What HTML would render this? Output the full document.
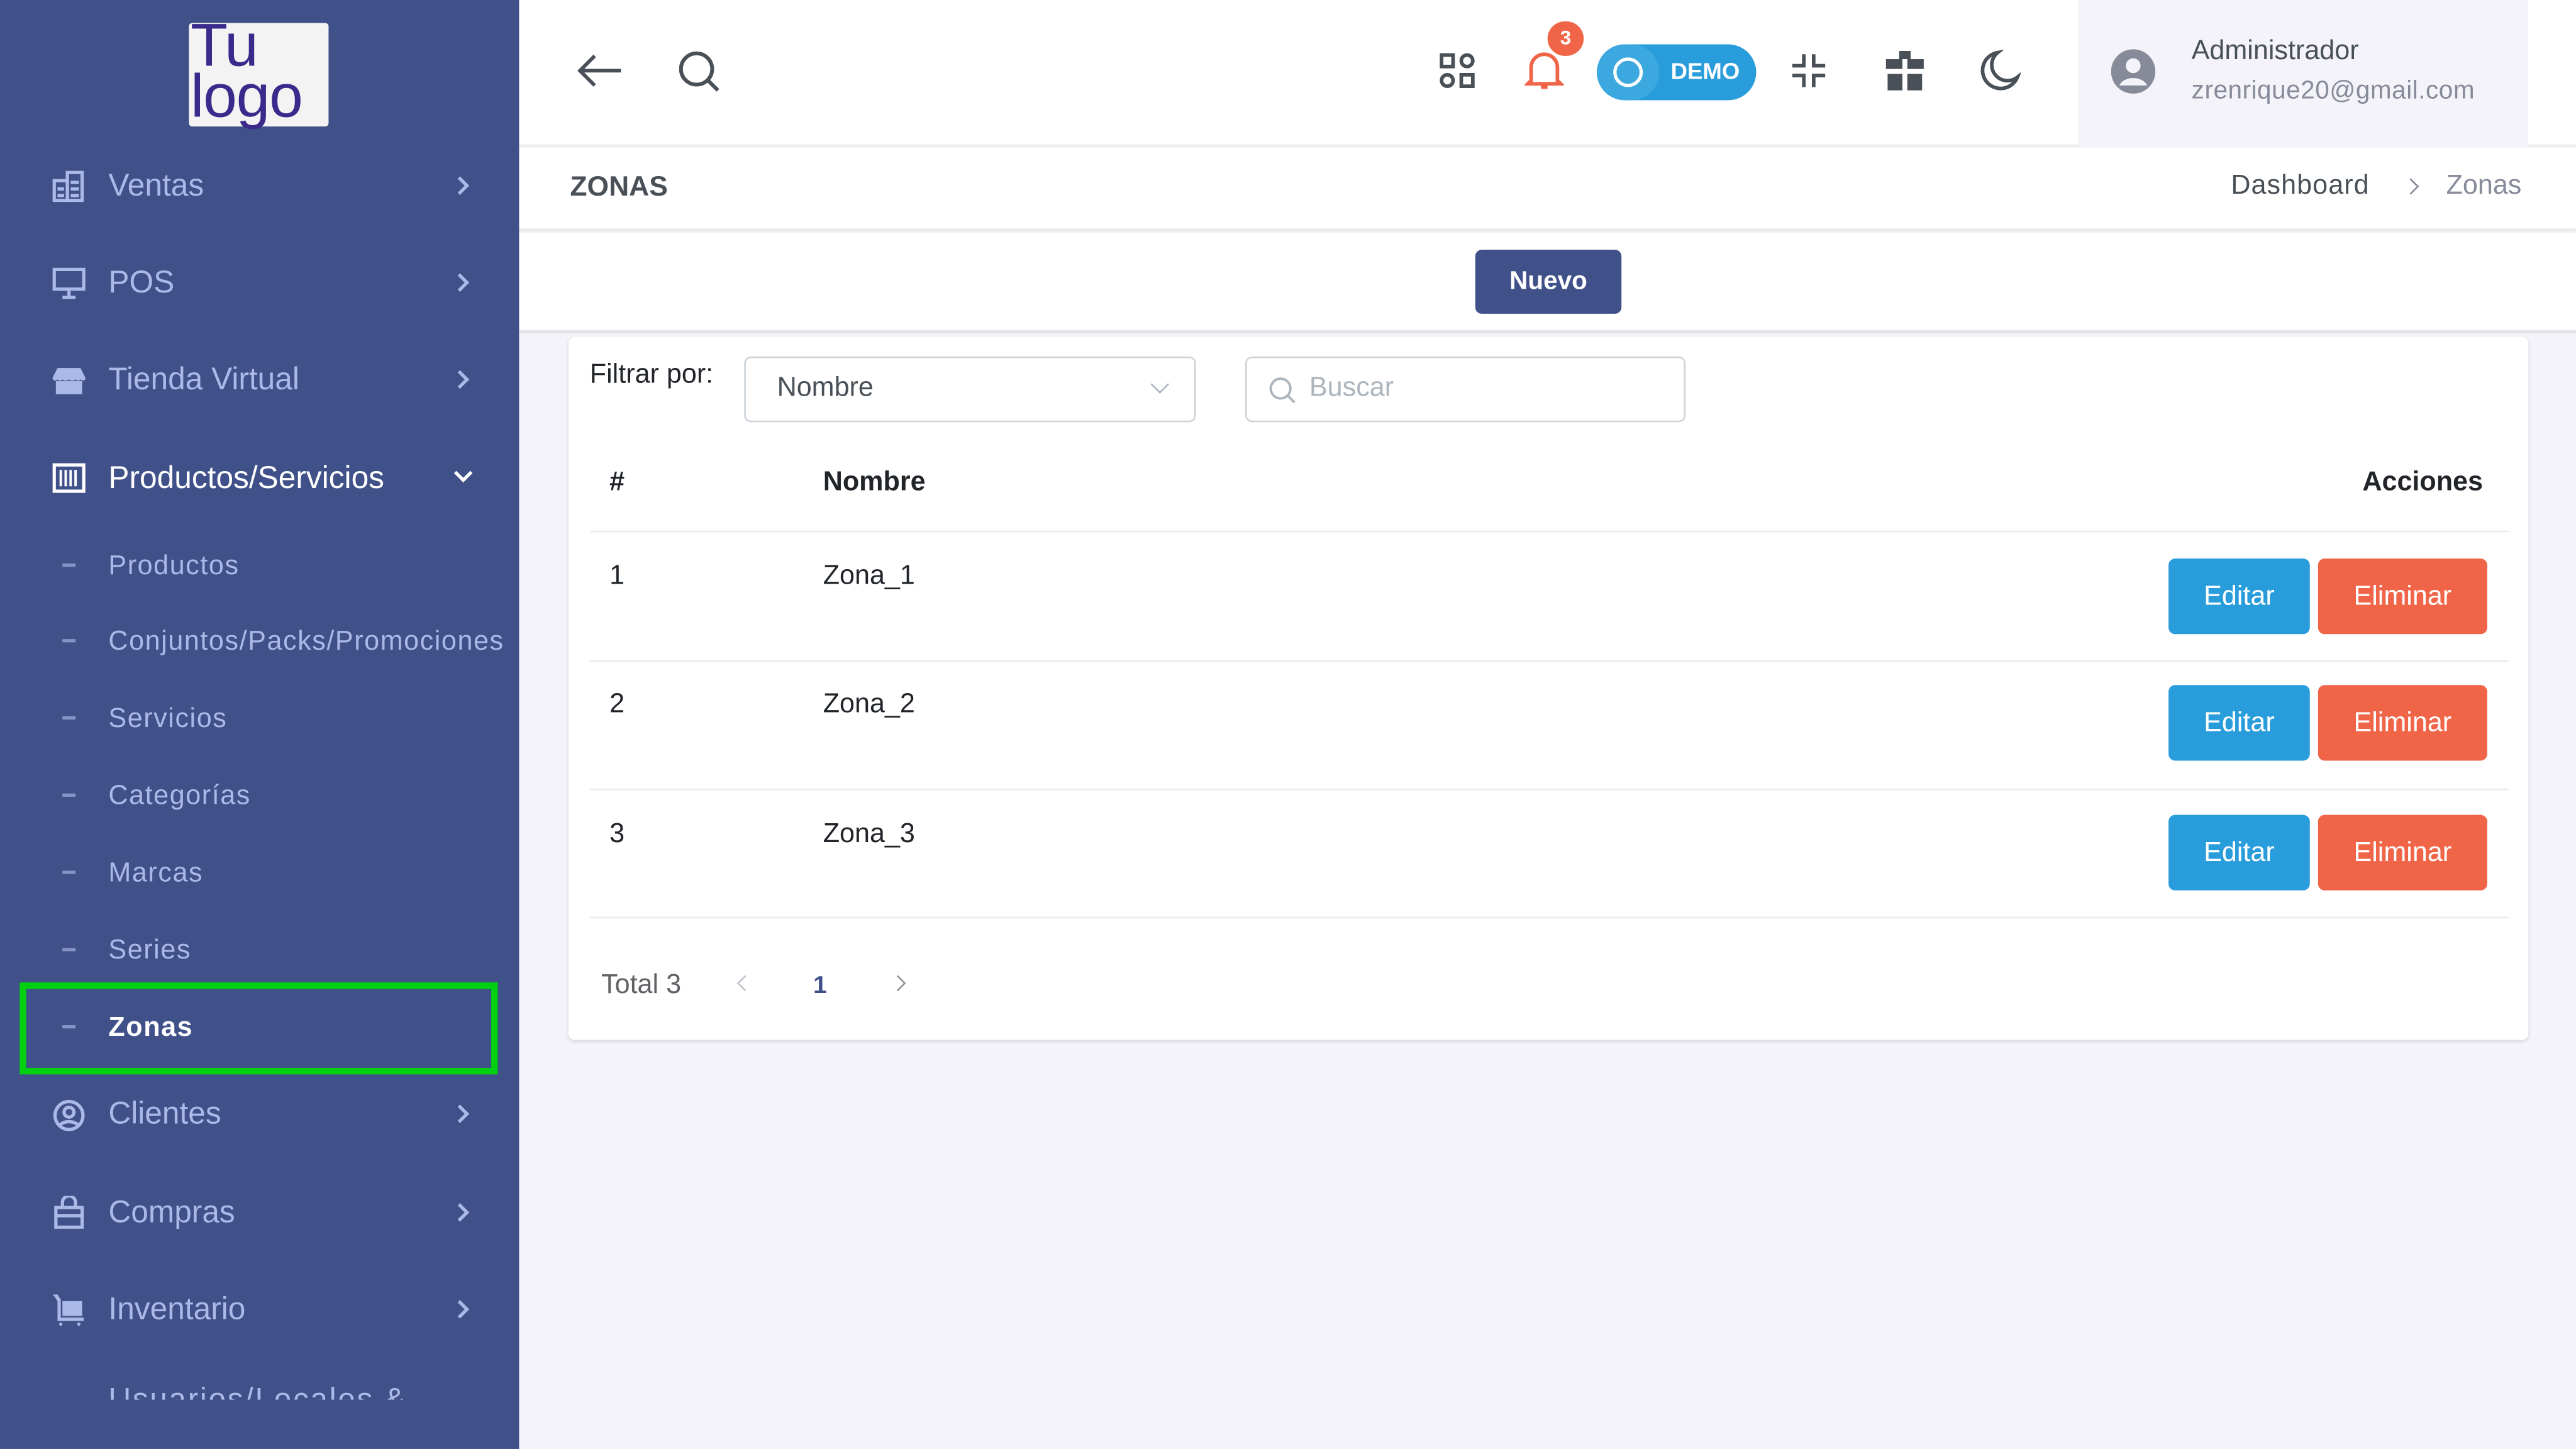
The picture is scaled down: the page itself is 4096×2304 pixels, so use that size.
<!DOCTYPE html>
<html><head><meta charset="utf-8"><style>
*{margin:0;padding:0;box-sizing:border-box}
html,body{width:4096px;height:2302px;overflow:hidden;background:#f3f3f9;font-family:"Liberation Sans",sans-serif}
#w{position:absolute;left:0;top:0;width:1568px;height:882px;transform:scale(2.6122);transform-origin:0 0;background:#f3f3f9}
.a{position:absolute;white-space:nowrap}
.sb{position:absolute;left:0;top:0;width:316px;height:882px;background:#405189;overflow:hidden}
.mi{position:absolute;left:66px;font-size:19px;color:#abb9e8;transform:translateY(-50%)}
.si{position:absolute;left:66px;font-size:16.5px;color:#abb9e8;transform:translateY(-50%);letter-spacing:0.6px}
.dash{position:absolute;left:38px;width:8px;height:2px;background:#8593c6}
.chev{position:absolute;left:276px;width:8px;height:8px;border-right:2px solid #abb9e8;border-top:2px solid #abb9e8;transform:rotate(45deg)}
.ic{position:absolute;left:32px;width:20px;height:20px}
.btn{position:absolute;height:46px;border-radius:4px;color:#fff;font-size:16.5px;display:flex;align-items:center;justify-content:center}
.ed{left:1320px;width:86px;background:#299cdb}
.el{left:1411px;width:103px;background:#f06548}
.hl{position:absolute;left:359px;width:1168px;height:1px;background:#e9ebec}
.td{position:absolute;font-size:16.5px;color:#212529;transform:translateY(-50%)}
</style></head><body><div id="w">
<div class="sb">
<div class="si" style="top:391px">Conjuntos/Packs/Promociones</div>
</div>
<div class="a" style="left:115px;top:14px;width:85px;height:63px;background:#f3f3f3;border-radius:2px"></div>
<div class="a" style="left:116px;top:12px;font-size:37px;line-height:31px;color:#3b2a8c;letter-spacing:-0.5px">Tu<br>logo</div>

<svg class="ic" style="top:103px" viewBox="0 0 20 20" fill="none" stroke="#abb9e8" stroke-width="2"><rect x="1" y="7" width="8" height="12"/><rect x="9" y="2" width="9" height="17"/><path d="M3 12h4M3 16h4M11 8h5M11 12h5M11 16h5"/></svg>
<div class="mi" style="top:114px">Ventas</div><div class="chev" style="top:109px"></div>
<svg class="ic" style="top:162px" viewBox="0 0 20 20" fill="none" stroke="#abb9e8" stroke-width="2"><rect x="1" y="2" width="18" height="12"/><path d="M10 14v4M6 19h8"/></svg>
<div class="mi" style="top:173px">POS</div><div class="chev" style="top:168px"></div>
<svg class="ic" style="top:222px" viewBox="0 0 20 20" fill="#abb9e8"><path d="M3 2h14l3 6c0 2-2 2-3 1-1 1-2 1-3 0-1 1-3 1-4 0-1 1-3 1-4 0-1 1-2 1-3 0-1 1-3 1-3-1z"/><rect x="2" y="10" width="16" height="8"/></svg>
<div class="mi" style="top:232px">Tienda Virtual</div><div class="chev" style="top:227px"></div>
<svg class="ic" style="top:281px" viewBox="0 0 20 20" fill="none" stroke="#fff" stroke-width="2"><rect x="1" y="2" width="18" height="16"/><path d="M5 5v10M8 5v10M11 5v10M14 5v10" stroke-width="1.5"/></svg>
<div class="mi" style="top:292px;color:#fff">Productos/Servicios</div>
<div class="a" style="left:278px;top:284px;width:8px;height:8px;border-right:2px solid #fff;border-bottom:2px solid #fff;transform:rotate(45deg)"></div>

<div class="dash" style="top:343px"></div><div class="si" style="top:345px">Productos</div>
<div class="dash" style="top:389px"></div>
<div class="dash" style="top:436px"></div><div class="si" style="top:438px">Servicios</div>
<div class="dash" style="top:483px"></div><div class="si" style="top:485px">Categorías</div>
<div class="dash" style="top:530px"></div><div class="si" style="top:532px">Marcas</div>
<div class="dash" style="top:577px"></div><div class="si" style="top:579px">Series</div>
<div class="a" style="left:12px;top:598px;width:291px;height:56px;border:4px solid #00d010"></div>
<div class="dash" style="top:624px"></div><div class="si" style="top:626px;color:#fff;font-weight:bold">Zonas</div>

<svg class="ic" style="top:669px" viewBox="0 0 20 20" fill="none" stroke="#abb9e8" stroke-width="2"><circle cx="10" cy="10" r="8.5"/><circle cx="10" cy="8" r="3"/><path d="M4.5 16c2-3 9-3 11 0"/></svg>
<div class="mi" style="top:679px">Clientes</div><div class="chev" style="top:674px"></div>
<svg class="ic" style="top:728px" viewBox="0 0 20 20" fill="none" stroke="#abb9e8" stroke-width="2"><rect x="2" y="7" width="16" height="12"/><path d="M6 7V4a4 4 0 0 1 8 0v3M2 12h16"/></svg>
<div class="mi" style="top:739px">Compras</div><div class="chev" style="top:734px"></div>
<svg class="ic" style="top:787px" viewBox="0 0 20 20" fill="#abb9e8"><path d="M0 1h3l2 3v11h14v2H3V5L1 2z"/><rect x="6" y="5" width="12" height="9"/><circle cx="5" cy="19" r="1"/><circle cx="16" cy="19" r="1"/></svg>
<div class="mi" style="top:798px">Inventario</div><div class="chev" style="top:793px"></div>
<div class="a" style="left:66px;top:842px;height:10px;overflow:hidden;font-size:19px;color:#abb9e8;line-height:22px;letter-spacing:1px">Usuarios/Locales &amp;</div>

<div class="a" style="left:316px;top:0;width:1252px;height:89px;background:#fff;border-bottom:1px solid #e9ebec"></div>
<svg class="a" style="left:350px;top:31px" width="30" height="24" viewBox="0 0 30 24" fill="none" stroke="#495057" stroke-width="2.2"><path d="M28 12H3M12 3l-9 9 9 9"/></svg>
<svg class="a" style="left:412px;top:30px" width="27" height="27" viewBox="0 0 27 27" fill="none" stroke="#495057" stroke-width="2.3"><circle cx="12" cy="12" r="9.5"/><path d="M19 19l6 6"/></svg>
<svg class="a" style="left:876px;top:32px" width="22" height="22" viewBox="0 0 22 22" fill="none" stroke="#495057" stroke-width="2.2"><rect x="1.5" y="1.5" width="7" height="7"/><circle cx="17" cy="5" r="3.5"/><circle cx="5" cy="17" r="3.5"/><rect x="13.5" y="13.5" width="7" height="7"/></svg>
<svg class="a" style="left:928px;top:30px" width="24" height="26" viewBox="0 0 24 26" fill="none" stroke="#f06548" stroke-width="2.2"><path d="M4 19V11a8 8 0 0 1 16 0v8l2 2H2z"/><path d="M10 23h4"/></svg>
<div class="a" style="left:942px;top:13px;width:22px;height:21px;border-radius:11px;background:#f06548;color:#fff;font-size:12px;font-weight:bold;text-align:center;line-height:21px">3</div>
<div class="a" style="left:972px;top:27px;width:97px;height:34px;border-radius:17px;background:#299cdb"></div>
<div class="a" style="left:972px;top:27px;width:38px;height:34px;border-radius:17px;background:#3ba8e0"></div>
<div class="a" style="left:982px;top:35px;width:18px;height:18px;border-radius:9px;border:2px solid #fff"></div>
<div class="a" style="left:1017px;top:35px;font-size:14px;color:#fff;font-weight:bold">DEMO</div>
<svg class="a" style="left:1090px;top:32px" width="22" height="22" viewBox="0 0 22 22" fill="none" stroke="#495057" stroke-width="2.2"><path d="M8 1v7H1M14 1v7h7M8 21v-7H1M14 21v-7h7"/></svg>
<svg class="a" style="left:1147px;top:30px" width="25" height="26" viewBox="0 0 25 26" fill="#495057"><rect x="9" y="1" width="7" height="6"/><rect x="1" y="6" width="23" height="7"/><rect x="2" y="15" width="21" height="10"/><rect x="11" y="6" width="3" height="20" fill="#fff"/><rect x="1" y="12" width="23" height="2" fill="#fff"/></svg>
<svg class="a" style="left:1205px;top:30px" width="25" height="26" viewBox="0 0 25 26" fill="none" stroke="#495057" stroke-width="2.2"><path d="M11 2A11 11 0 1 0 23 17 9 9 0 0 1 11 2z"/></svg>
<div class="a" style="left:1265px;top:0;width:274px;height:89px;background:#f3f3f9"></div>
<svg class="a" style="left:1285px;top:30px" width="27" height="27" viewBox="0 0 27 27"><circle cx="13.5" cy="13.5" r="13.5" fill="#878a99"/><circle cx="13.5" cy="10" r="4.5" fill="#f3f3f9"/><path d="M5 22c3-6 14-6 17 0" fill="#f3f3f9"/></svg>
<div class="a" style="left:1334px;top:22px;font-size:16.5px;color:#495057">Administrador</div>
<div class="a" style="left:1334px;top:47px;font-size:15.5px;color:#878a99;letter-spacing:0.2px">zrenrique20@gmail.com</div>

<div class="a" style="left:316px;top:90px;width:1252px;height:51px;background:#fff;border-bottom:2px solid #e9ebec"></div>
<div class="a" style="left:347px;top:104px;font-size:17px;font-weight:bold;color:#495057">ZONAS</div>
<div class="a" style="left:1358px;top:104px;font-size:16.5px;color:#495057;letter-spacing:0.4px">Dashboard</div>
<div class="a" style="left:1464px;top:110px;width:7px;height:7px;border-right:1.5px solid #878a99;border-top:1.5px solid #878a99;transform:rotate(45deg)"></div>
<div class="a" style="left:1489px;top:104px;font-size:16.5px;color:#878a99">Zonas</div>

<div class="a" style="left:316px;top:142px;width:1252px;height:61px;background:#fff;border-bottom:2px solid #e3e5ec"></div>
<div class="btn" style="left:898px;top:152px;width:89px;height:39px;background:#405189;font-weight:bold;font-size:15.5px">Nuevo</div>

<div class="a" style="left:346px;top:205px;width:1193px;height:428px;background:#fff;border-radius:4px;box-shadow:0 1px 2px rgba(56,65,74,.15)"></div>
<div class="a" style="left:359px;top:219px;font-size:16.5px;color:#212529">Filtrar por:</div>
<div class="a" style="left:453px;top:217px;width:275px;height:40px;border:1px solid #ced4da;border-radius:4px"></div>
<div class="a" style="left:473px;top:227px;font-size:16.5px;color:#495057">Nombre</div>
<div class="a" style="left:702px;top:230px;width:8px;height:8px;border-right:1.3px solid #adb5bd;border-bottom:1.3px solid #adb5bd;transform:rotate(45deg)"></div>
<div class="a" style="left:758px;top:217px;width:268px;height:40px;border:1px solid #ced4da;border-radius:4px"></div>
<svg class="a" style="left:772px;top:229px" width="17" height="17" viewBox="0 0 17 17" fill="none" stroke="#adb5bd" stroke-width="1.5"><circle cx="7.5" cy="7.5" r="6"/><path d="M12 12l4 4"/></svg>
<div class="a" style="left:797px;top:227px;font-size:16.5px;color:#adb5bd">Buscar</div>

<div class="td" style="left:371px;top:294px;font-weight:bold">#</div>
<div class="td" style="left:501px;top:294px;font-weight:bold">Nombre</div>
<div class="td" style="left:1438px;top:294px;font-weight:bold">Acciones</div>
<div class="hl" style="top:323px"></div>

<div class="td" style="left:371px;top:351px">1</div><div class="td" style="left:501px;top:351px">Zona_1</div>
<div class="btn ed" style="top:340px">Editar</div><div class="btn el" style="top:340px">Eliminar</div>
<div class="hl" style="top:402px"></div>
<div class="td" style="left:371px;top:429px">2</div><div class="td" style="left:501px;top:429px">Zona_2</div>
<div class="btn ed" style="top:417px">Editar</div><div class="btn el" style="top:417px">Eliminar</div>
<div class="hl" style="top:480px"></div>
<div class="td" style="left:371px;top:508px">3</div><div class="td" style="left:501px;top:508px">Zona_3</div>
<div class="btn ed" style="top:496px">Editar</div><div class="btn el" style="top:496px">Eliminar</div>
<div class="hl" style="top:558px"></div>

<div class="td" style="left:366px;top:600px;color:#606266">Total 3</div>
<div class="a" style="left:450px;top:595px;width:7px;height:7px;border-left:1.5px solid #c0c4cc;border-bottom:1.5px solid #c0c4cc;transform:rotate(45deg)"></div>
<div class="td" style="left:495px;top:600px;color:#405189;font-weight:bold;font-size:15px">1</div>
<div class="a" style="left:543px;top:595px;width:7px;height:7px;border-right:1.5px solid #909399;border-top:1.5px solid #909399;transform:rotate(45deg)"></div>
</div></body></html>
